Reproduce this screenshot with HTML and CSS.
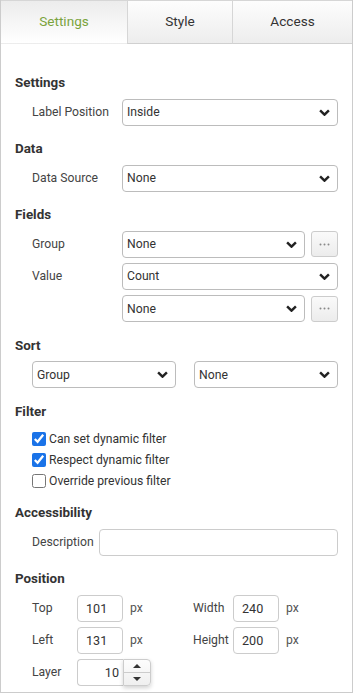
FILE: index.html
```html
<!DOCTYPE html>
<html lang="en">
<head>
    <meta charset="UTF-8">
    <meta name="viewport" content="width=device-width, initial-scale=1.0">
    <title>Chart Properties</title>
    <link rel="stylesheet" href="styles.css">
</head>
<body>
    <div class="panel">
        <div class="tabs">
            <div class="tab active">Settings</div>
            <div class="tab">Style</div>
            <div class="tab">Access</div>
        </div>

        <div class="content">
            <!-- Settings -->
            <div class="group">
                <h3>Settings</h3>
                <div class="row">
                    <label>Label Position</label>
                    <div class="select"><span>Inside</span><svg viewBox="0 0 10 6"><path d="M1 1l4 4 4-4"/></svg></div>
                </div>
            </div>

            <!-- Data -->
            <div class="group">
                <h3>Data</h3>
                <div class="row">
                    <label>Data Source</label>
                    <div class="select"><span>None</span><svg viewBox="0 0 10 6"><path d="M1 1l4 4 4-4"/></svg></div>
                </div>
            </div>

            <!-- Fields -->
            <div class="group">
                <h3>Fields</h3>
                <div class="row">
                    <label>Group</label>
                    <div class="select"><span>None</span><svg viewBox="0 0 10 6"><path d="M1 1l4 4 4-4"/></svg></div>
                    <button class="more"><svg viewBox="0 0 11 3"><circle cx="1.5" cy="1.5" r="1"/><circle cx="5.5" cy="1.5" r="1"/><circle cx="9.5" cy="1.5" r="1"/></svg></button>
                </div>
                <div class="row">
                    <label>Value</label>
                    <div class="select"><span>Count</span><svg viewBox="0 0 10 6"><path d="M1 1l4 4 4-4"/></svg></div>
                </div>
                <div class="row">
                    <label></label>
                    <div class="select"><span>None</span><svg viewBox="0 0 10 6"><path d="M1 1l4 4 4-4"/></svg></div>
                    <button class="more"><svg viewBox="0 0 11 3"><circle cx="1.5" cy="1.5" r="1"/><circle cx="5.5" cy="1.5" r="1"/><circle cx="9.5" cy="1.5" r="1"/></svg></button>
                </div>
            </div>

            <!-- Sort -->
            <div class="group">
                <h3>Sort</h3>
                <div class="sort-row">
                    <div class="select"><span>Group</span><svg viewBox="0 0 10 6"><path d="M1 1l4 4 4-4"/></svg></div>
                    <div class="select"><span>None</span><svg viewBox="0 0 10 6"><path d="M1 1l4 4 4-4"/></svg></div>
                </div>
            </div>

            <!-- Filter -->
            <div class="group filter">
                <h3>Filter</h3>
                <label class="check"><input type="checkbox" checked> Can set dynamic filter</label>
                <label class="check"><input type="checkbox" checked> Respect dynamic filter</label>
                <label class="check"><input type="checkbox"> Override previous filter</label>
            </div>

            <!-- Accessibility -->
            <div class="group">
                <h3>Accessibility</h3>
                <div class="row desc">
                    <label>Description</label>
                    <input type="text" class="text">
                </div>
            </div>

            <!-- Position -->
            <div class="group">
                <h3>Position</h3>
                <div class="pos-grid">
                    <div class="pos left">
                        <label>Top</label>
                        <input type="text" class="num" value="101">
                        <span class="unit">px</span>
                    </div>
                    <div class="pos right">
                        <label>Width</label>
                        <input type="text" class="num" value="240">
                        <span class="unit">px</span>
                    </div>
                    <div class="pos left">
                        <label>Left</label>
                        <input type="text" class="num" value="131">
                        <span class="unit">px</span>
                    </div>
                    <div class="pos right">
                        <label>Height</label>
                        <input type="text" class="num" value="200">
                        <span class="unit">px</span>
                    </div>
                    <div class="pos left">
                        <label>Layer</label>
                        <div class="spinner">
                            <input type="text" value="10">
                            <div class="spin-btns">
                                <span class="up"></span>
                                <span class="down"></span>
                            </div>
                        </div>
                    </div>
                </div>
            </div>
        </div>
    </div>
</body>
</html>
```

FILE: styles.css
```css
/* Reset */
* {
    margin: 0;
    padding: 0;
    box-sizing: border-box;
}

body {
    font-family: Roboto, "Liberation Sans", Arial, sans-serif;
    font-size: 12.2px;
    color: #333;
    background: #fff;
}

.panel {
    width: 353px;
    height: 693px;
    border: 1px solid #ccc;
    border-top: none;
    background: #fff;
}

/* Tabs */
.tabs {
    display: flex;
    height: 44px;
}

.tab {
    flex: 1;
    display: flex;
    align-items: center;
    justify-content: center;
    padding-bottom: 2px;
    font-size: 13.6px;
    color: #333;
    background: linear-gradient(#fdfdfd, #ededed);
    border-top: 1px solid #d6d6d6;
    border-left: 1px solid #d6d6d6;
    border-bottom: 1px solid #d0d0d0;
}

.tab:first-child {
    border-left: none;
}

.tab.active {
    flex: 0 0 126px;
    color: #7aa33c;
    background: linear-gradient(#ececec, #fff);
    border-bottom-color: transparent;
}

.tab:nth-child(2) {
    flex: 0 0 105px;
}

/* Content */
.content {
    padding: 29px 14px 0 14px;
}

.group {
    margin-bottom: 13.5px;
}

.group h3 {
    font-size: 13.4px;
    font-weight: bold;
    line-height: 20px;
    margin-bottom: 5.5px;
    color: #333;
}

.row {
    display: flex;
    align-items: center;
    padding-left: 17px;
    margin-bottom: 5.3px;
}

.row:last-child {
    margin-bottom: 0;
}

.row label {
    flex: 0 0 90px;
    color: #444;
}

/* Select */
.select {
    flex: 1;
    height: 27px;
    display: flex;
    align-items: center;
    justify-content: space-between;
    padding: 0 7px 0 4px;
    border: 1px solid #bcbcbc;
    border-radius: 4px;
    background: #fff;
    color: #333;
}

.select svg {
    width: 11px;
    height: 7px;
    fill: none;
    stroke: #222;
    stroke-width: 2.2;
}

.more {
    flex: 0 0 27px;
    height: 26px;
    margin-left: 6px;
    display: flex;
    align-items: center;
    justify-content: center;
    border: 1px solid #ccc;
    border-radius: 3px;
    background: linear-gradient(#fafafa, #ececec);
}

.more svg {
    width: 11px;
    height: 3px;
    fill: #888;
}

/* Sort */
.sort-row {
    display: flex;
    gap: 18px;
    padding-left: 17px;
}

/* Filter */
.filter {
    margin-bottom: 12px;
}

.filter h3 {
    margin-bottom: 6.5px;
}

.check {
    display: flex;
    align-items: center;
    height: 21px;
    padding-left: 17px;
    color: #333;
}

.check input {
    width: 14px;
    height: 14px;
    margin: 0 3px 0 0;
    accent-color: #1a73e8;
}

/* Text inputs */
.text,
.num,
.spinner input {
    height: 27px;
    border: 1px solid #ccc;
    border-radius: 4px;
    font-family: inherit;
    font-size: 12.6px;
    color: #333;
    outline: none;
}

.desc label {
    flex: 0 0 auto;
    margin-right: 5.5px;
}

.text {
    flex: 1;
}

/* Position */
.pos-grid {
    display: grid;
    grid-template-columns: 143px 144px;
    column-gap: 18px;
    row-gap: 5px;
    padding-left: 17px;
}

.pos {
    display: flex;
    align-items: center;
}

.pos label {
    color: #444;
}

.pos.left label {
    flex: 0 0 45px;
}

.pos.right label {
    flex: 0 0 40px;
}

.num {
    width: 46px;
    padding-left: 8px;
}

.unit {
    margin-left: 7px;
    color: #555;
}

.spinner {
    display: flex;
    height: 27px;
}

.spinner input {
    width: 46px;
    text-align: right;
    padding-right: 4px;
    border-right: none;
    border-radius: 4px 0 0 4px;
}

.spin-btns {
    width: 28px;
    display: flex;
    flex-direction: column;
    border: 1px solid #ccc;
    border-radius: 0 4px 4px 0;
    box-shadow: 0 2px 4px rgba(0, 0, 0, 0.18);
    background: linear-gradient(#fdfdfd, #efefef);
}

.spin-btns span {
    flex: 1;
    display: flex;
    align-items: center;
    justify-content: center;
}

.spin-btns .up {
    border-bottom: 1px solid #ccc;
}

.spin-btns .up::after {
    content: "";
    border-left: 4px solid transparent;
    border-right: 4px solid transparent;
    border-bottom: 4px solid #333;
}

.spin-btns .down::after {
    content: "";
    border-left: 4px solid transparent;
    border-right: 4px solid transparent;
    border-top: 4px solid #333;
}
```
